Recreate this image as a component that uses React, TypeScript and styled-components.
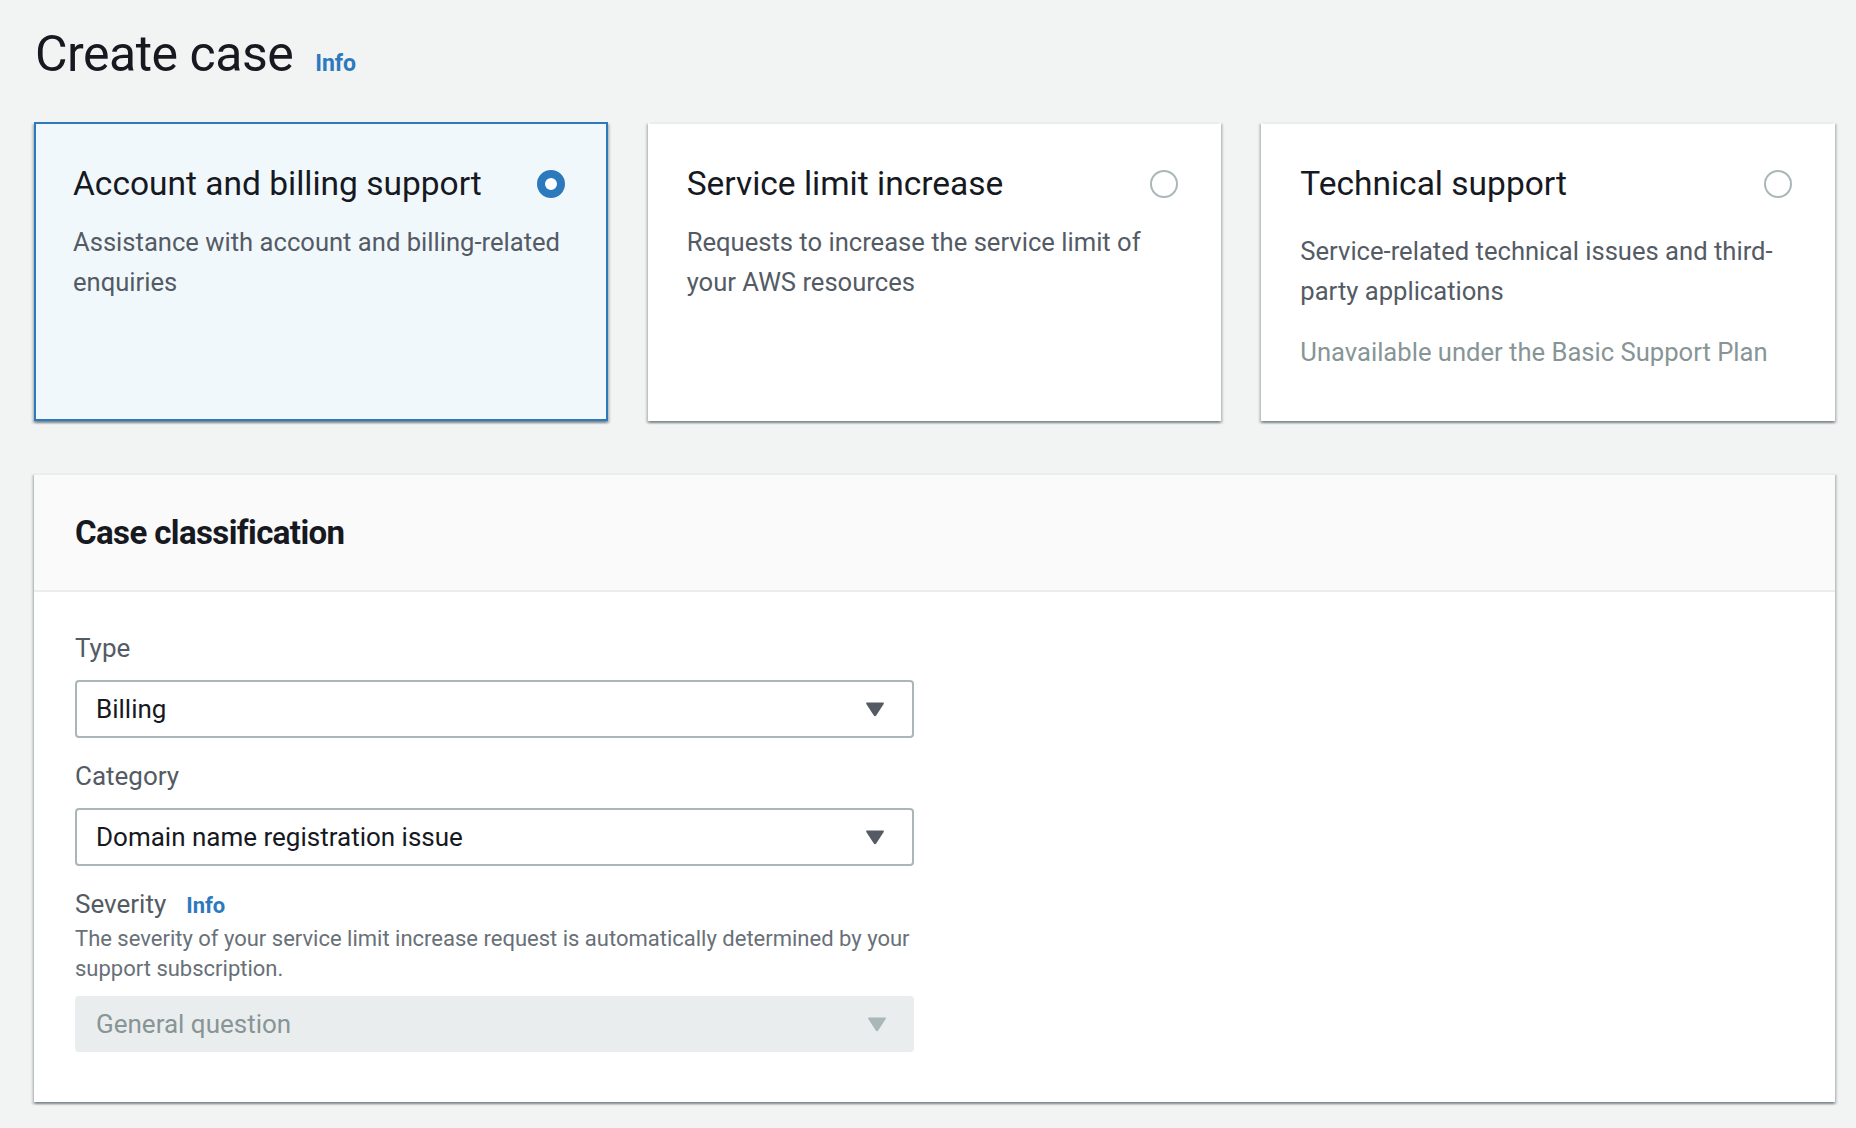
import React from "react";
import styled, { createGlobalStyle } from "styled-components";

const GlobalStyle = createGlobalStyle`
  html, body {
    margin: 0;
    padding: 0;
    background: #f2f3f3;
  }
  body {
    font-family: Roboto, "Liberation Sans", Arial, sans-serif;
    color: #16191f;
    -webkit-font-smoothing: antialiased;
  }
  * { box-sizing: border-box; }
`;

const Page = styled.div`
  padding: 21px 21px 24px 34px;
  display: flex;
  flex-direction: column;
`;

const TitleRow = styled.div`
  display: flex;
  align-items: baseline;
  gap: 22px;
  padding-left: 1px;
  height: 71px;
`;

const Title = styled.h1`
  margin: 0;
  font-size: 50px;
  line-height: 66px;
  font-weight: 400;
  letter-spacing: -0.5px;
  color: #16191f;
`;

const InfoLink = styled.a<{ $size?: number }>`
  font-size: ${(p) => p.$size ?? 23}px;
  font-weight: 700;
  color: #2d79be;
  text-decoration: none;
`;

const Tiles = styled.div`
  margin-top: 30px;
  display: grid;
  grid-template-columns: repeat(3, 1fr);
  gap: 40px;
`;

const Tile = styled.div<{ $selected?: boolean }>`
  height: 299px;
  padding: 38px 41px 38px 37px;
  background: ${(p) => (p.$selected ? "#f1f8fc" : "#ffffff")};
  border: 2px solid ${(p) => (p.$selected ? "#2d79be" : "transparent")};
  border-top-color: ${(p) => (p.$selected ? "#2d79be" : "#eaeded")};
  box-shadow: 0 2px 2px 0 rgba(0, 28, 36, 0.3),
    2px 2px 2px 0 rgba(0, 28, 36, 0.15),
    -2px 2px 2px 0 rgba(0, 28, 36, 0.15);
  display: flex;
  flex-direction: column;
`;

const TileHead = styled.div`
  display: flex;
  align-items: center;
  justify-content: space-between;
  height: 44px;
`;

const TileTitle = styled.div`
  font-size: 33.5px;
  line-height: 44px;
  color: #16191f;
`;

const Radio = styled.span<{ $checked?: boolean }>`
  width: 28px;
  height: 28px;
  border-radius: 50%;
  flex: none;
  border: ${(p) => (p.$checked ? "8px solid #2d79be" : "2.5px solid #aab7b8")};
  background: #ffffff;
`;

const TileText = styled.p<{ $top?: number; $muted?: boolean }>`
  margin: ${(p) => p.$top ?? 16}px -8px 0 0;
  font-size: 25.6px;
  line-height: 40px;
  color: ${(p) => (p.$muted ? "#879596" : "#545b64")};
`;

const Panel = styled.section`
  margin-top: 52px;
  background: #ffffff;
  border-top: 2px solid #eaeded;
  box-shadow: 0 2px 2px 0 rgba(0, 28, 36, 0.3),
    2px 2px 2px 0 rgba(0, 28, 36, 0.15),
    -2px 2px 2px 0 rgba(0, 28, 36, 0.15);
`;

const PanelHeader = styled.header`
  background: #fafafa;
  border-bottom: 2px solid #eaeded;
  padding: 38px 40px 37px 41px;
`;

const PanelTitle = styled.h2`
  margin: 0;
  font-size: 33px;
  line-height: 40px;
  font-weight: 700;
  letter-spacing: -0.6px;
  color: #16191f;
`;

const PanelBody = styled.div`
  padding: 36px 40px 50px 41px;
  display: flex;
  flex-direction: column;
  gap: 18px;
`;

const Field = styled.div`
  width: 839px;
  display: flex;
  flex-direction: column;
`;

const LabelRow = styled.div`
  display: flex;
  align-items: baseline;
  gap: 20px;
`;

const Label = styled.label`
  font-size: 26px;
  line-height: 40px;
  color: #545b64;
`;

const Description = styled.div`
  font-size: 22px;
  line-height: 30px;
  color: #687078;
`;

const Select = styled.div<{ $disabled?: boolean }>`
  margin-top: 12px;
  height: ${(p) => (p.$disabled ? 56 : 58)}px;
  display: flex;
  align-items: center;
  justify-content: space-between;
  padding: 0 27px 0 ${(p) => (p.$disabled ? 21 : 19)}px;
  border: ${(p) => (p.$disabled ? "none" : "2px solid #aab7b8")};
  border-radius: 4px;
  background: ${(p) => (p.$disabled ? "#eaeded" : "#ffffff")};
  font-size: 26px;
  color: ${(p) => (p.$disabled ? "#879596" : "#16191f")};
`;

const Caret = ({ color }: { color: string }) => (
  <svg width="20" height="16" viewBox="0 0 20 16" aria-hidden="true">
    <path
      d="M2 1.5 H18 Q19.5 1.5 18.7 2.9 L11.2 14.4 Q10 16 8.8 14.4 L1.3 2.9 Q0.5 1.5 2 1.5 Z"
      fill={color}
    />
  </svg>
);

export default function App() {
  return (
    <>
      <GlobalStyle />
      <Page>
        <TitleRow>
          <Title>Create case</Title>
          <InfoLink href="#">Info</InfoLink>
        </TitleRow>

        <Tiles>
          <Tile $selected>
            <TileHead>
              <TileTitle>Account and billing support</TileTitle>
              <Radio $checked />
            </TileHead>
            <TileText>Assistance with account and billing-related enquiries</TileText>
          </Tile>
          <Tile>
            <TileHead>
              <TileTitle>Service limit increase</TileTitle>
              <Radio />
            </TileHead>
            <TileText>Requests to increase the service limit of your AWS resources</TileText>
          </Tile>
          <Tile>
            <TileHead>
              <TileTitle>Technical support</TileTitle>
              <Radio />
            </TileHead>
            <TileText $top={25}>Service-related technical issues and third-party applications</TileText>
            <TileText $top={21} $muted>
              Unavailable under the Basic Support Plan
            </TileText>
          </Tile>
        </Tiles>

        <Panel>
          <PanelHeader>
            <PanelTitle>Case classification</PanelTitle>
          </PanelHeader>
          <PanelBody>
            <Field>
              <Label>Type</Label>
              <Select>
                <span>Billing</span>
                <Caret color="#545b64" />
              </Select>
            </Field>
            <Field>
              <Label>Category</Label>
              <Select>
                <span>Domain name registration issue</span>
                <Caret color="#545b64" />
              </Select>
            </Field>
            <Field>
              <LabelRow>
                <Label>Severity</Label>
                <InfoLink href="#" $size={22}>Info</InfoLink>
              </LabelRow>
              <Description>
                The severity of your service limit increase request is automatically determined by your support
                subscription.
              </Description>
              <Select $disabled>
                <span>General question</span>
                <Caret color="#aab7b8" />
              </Select>
            </Field>
          </PanelBody>
        </Panel>
      </Page>
    </>
  );
}
